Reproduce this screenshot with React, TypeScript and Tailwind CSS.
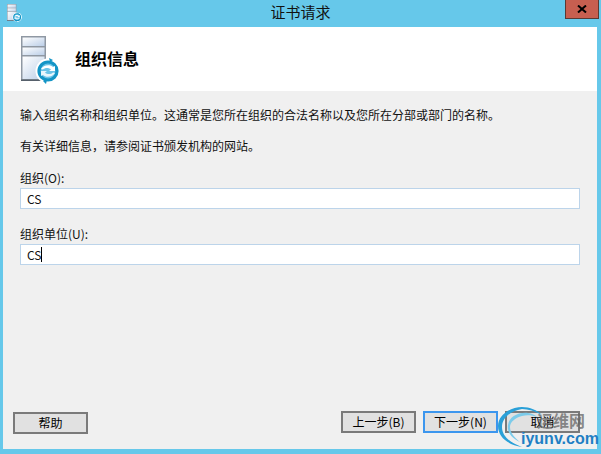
const FONT = "font-['Segoe_UI','Noto_Sans_CJK_SC','Noto_Sans',sans-serif]";

function CertIcon({ width, id }: { width: number; id: string }) {
	return (
		<svg width={width} height={(width * 48) / 40} viewBox="0 0 40 48">
			<defs>
				<linearGradient id={id} x1="0" y1="0" x2="1" y2="1">
					<stop offset="0" stopColor="#ffffff" />
					<stop offset="1" stopColor="#bccfe8" />
				</linearGradient>
			</defs>
			<rect x="0" y="0" width="25" height="45" fill="#8f98a3" />
			<rect x="1.5" y="1.5" width="22" height="8.5" fill={`url(#${id})`} />
			<rect x="1.5" y="11.5" width="22" height="7.5" fill={`url(#${id})`} />
			<rect x="1.5" y="20.5" width="22" height="22.5" fill={`url(#${id})`} />
			<rect x="0" y="43.5" width="25" height="1.5" fill="#56606b" />
			<circle cx="27" cy="35" r="12.5" fill="#ffffff" />
			<circle cx="27" cy="35" r="9" fill="#6cc4e8" stroke="#1495c6" strokeWidth="3.2" />
			<path d="M20 33c2-4 9-5 12-2l2-1v5h-6l2-1.500c-2-2-6-2-8 0z" fill="#ffffff" />
			<path d="M34 37c-2 4-9 5-12 2l-2 1v-5h6l-2 1.500c2 2 6 2 8 0z" fill="#e8f6fc" />
			<path d="M28 22l4 2-3 2zM25 48l-3-3 4-1z" fill="#1495c6" />
		</svg>
	);
}

function DialogButton({ label, focused }: { label: string; focused?: boolean }) {
	return (
		<button
			className={`h-[22px] w-[75px] border-2 bg-[#e1e1e1] text-[12px] leading-[18px] text-black ${
				focused ? "border-[#3c96ee]" : "border-[#7a7a7a]"
			}`}
		>
			{label}
		</button>
	);
}

function Field({ label, value, caret }: { label: string; value: string; caret?: boolean }) {
	return (
		<div className="flex flex-col">
			<label className="h-[20px] text-[12px] leading-[20px] text-[#111]">{label}</label>
			<div className="flex h-[21px] items-center border border-[#bcd4ea] bg-white pl-[6px] text-[12px] text-[#111]">
				<span>{value}</span>
				{caret && <span className="h-[15px] w-px bg-black" />}
			</div>
		</div>
	);
}

function Watermark() {
	return (
		<div className="pointer-events-none absolute bottom-[7px] right-[3px] h-[40px] w-[100px]">
			<svg className="absolute left-0 top-0" width="50" height="40" viewBox="0 0 50 40" fill="none">
				<path d="M24 40C10 38 0 30 0 19 0 8 12 0 24 0c8 0 15 3 20 8C37 4 30 2 24 2 12 4 4 11 4 20c0 9 8 16 20 20z" fill="#2aa0d8" />
				<path d="M22 35C13 31 9 25 10 18 11 10 20 5 30 6c4 .5 7 2 9 4-5-2-10-2.500-15-1-7 2-12 6-12 11 0 6 5 11 10 15z" fill="#7ccbea" />
			</svg>
			<span className="absolute left-[39px] top-[3px] text-[16px] font-bold leading-[20px] text-[#666]/75">
				运维网
			</span>
			<span className="absolute bottom-0 left-[23px] font-['Liberation_Sans',sans-serif] text-[16px] font-bold leading-[16px] text-[#1f7fc4]">
				iyunv.com
			</span>
		</div>
	);
}

export default function App() {
	return (
		<div className={`${FONT} relative flex h-[454px] w-[601px] flex-col overflow-hidden bg-[#66c8ea]`}>
			{/* Title bar */}
			<div className="relative flex h-[27px] shrink-0 items-center justify-center">
				<div className="absolute left-[7px] top-[4px]">
					<CertIcon width={15} id="slot-small" />
				</div>
				<span className="-mt-[3px] text-[15px] text-[#111]">证书请求</span>
				<div className="absolute right-[2px] top-0 flex h-[19px] w-[34px] items-center justify-center border border-[#5a3a34] border-t-0 bg-[#c75f50]">
					<svg width="10" height="8" viewBox="0 0 10 8">
						<path d="M1 0.500l8 7M9 0.500l-8 7" stroke="#000" strokeWidth="2" />
					</svg>
				</div>
			</div>

			{/* Client area */}
			<div className="ml-[3px] mr-[4px] mb-[5px] flex flex-1 flex-col bg-[#f0f0f0]">
				<div className="flex h-[64px] shrink-0 items-start bg-white pl-[18px] pt-[9px]">
					<CertIcon width={40} id="slot-large" />
					<h1 className="ml-[14px] mt-[10px] text-[16px] font-bold text-black">组织信息</h1>
				</div>

				<div className="flex flex-1 flex-col px-[17px] pt-[16px]">
					<p className="h-[16px] text-[12px] leading-[16px] text-[#111]">
						输入组织名称和组织单位。这通常是您所在组织的合法名称以及您所在分部或部门的名称。
					</p>
					<p className="mt-[15px] h-[16px] text-[12px] leading-[16px] text-[#111]">
						有关详细信息，请参阅证书颁发机构的网站。
					</p>
					<div className="mt-[14px] flex flex-col gap-[15px]">
						<Field label="组织(O):" value="CS" />
						<Field label="组织单位(U):" value="CS" caret />
					</div>

					<div className="mt-auto mb-[15px] flex items-center">
						<div className="-ml-[7px]">
							<DialogButton label="帮助" />
						</div>
						<div className="ml-auto flex gap-[7px]">
							<DialogButton label="上一步(B)" />
							<DialogButton label="下一步(N)" focused />
							<DialogButton label="取消" />
						</div>
					</div>
				</div>
			</div>

			<Watermark />
		</div>
	);
}
